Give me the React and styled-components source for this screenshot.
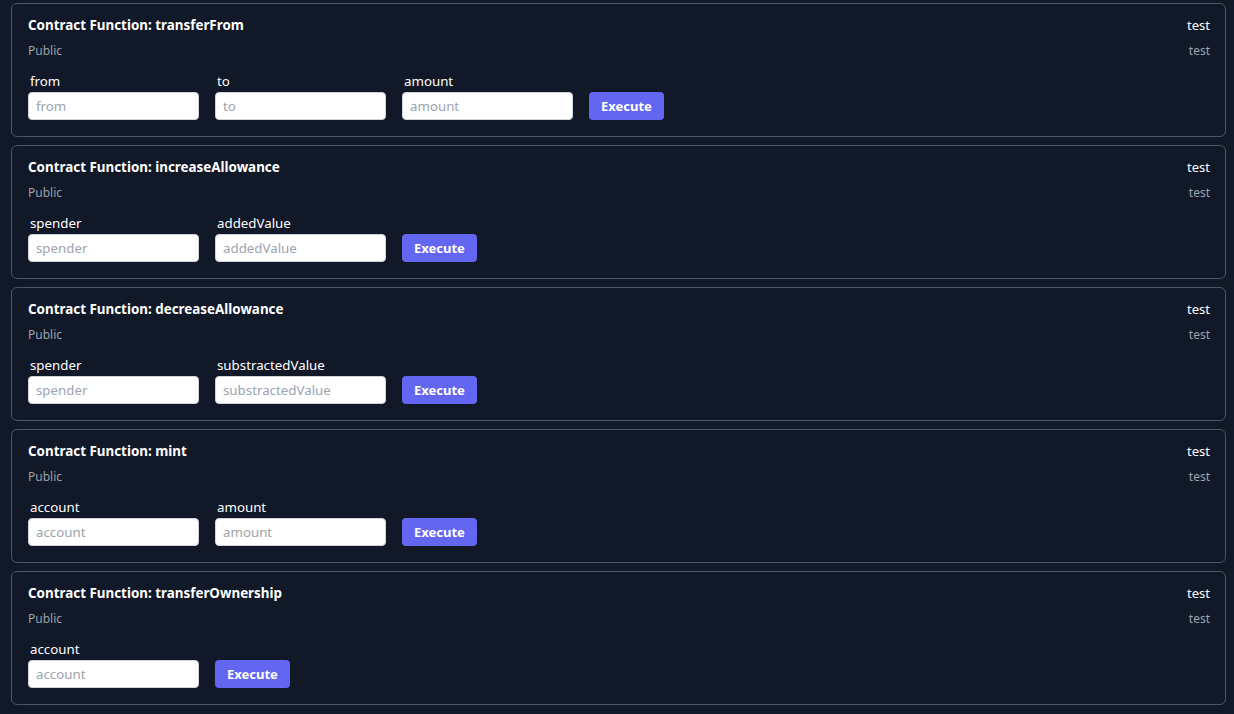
import React from 'react';
import styled, { createGlobalStyle } from 'styled-components';

const GlobalStyle = createGlobalStyle`
  html, body {
    margin: 0;
    padding: 0;
    background: #111827;
  }
  body {
    font-family: "Noto Sans", "Open Sans", Arial, sans-serif;
    color: #ffffff;
  }
`;

const Page = styled.div`
  display: flex;
  flex-direction: column;
  gap: 8px;
  padding: 3px 8px 8px 11px;
`;

const Card = styled.div`
  border: 1px solid #4b5563;
  border-radius: 6px;
  padding: 11px 15px 16px 16px;
`;

const Header = styled.div`
  display: flex;
  justify-content: space-between;
`;

const Col = styled.div`
  display: flex;
  flex-direction: column;
  align-items: ${(p) => (p.right ? 'flex-end' : 'flex-start')};
`;

const Title = styled.div`
  font-size: ${(p) => (p.light ? '13px' : '13.4px')};
  line-height: 20px;
  color: #ffffff;
  font-weight: ${(p) => (p.light ? 400 : 700)};
`;

const Sub = styled.div`
  font-size: 12px;
  line-height: 16px;
  margin-top: 8px;
  color: #9ca3af;
`;

const Row = styled.div`
  display: flex;
  align-items: flex-end;
  gap: 16px;
  margin-top: 12px;
`;

const Field = styled.div`
  display: flex;
  flex-direction: column;
`;

const Label = styled.label`
  font-size: 13.3px;
  line-height: 21px;
  padding-left: 2px;
  color: #ffffff;
`;

const Input = styled.input`
  box-sizing: border-box;
  width: 171px;
  height: 28px;
  border: 1px solid #d1d5db;
  border-radius: 4px;
  padding: 0 7px;
  font-family: inherit;
  font-size: 13.3px;
  color: #111827;
  background: #ffffff;
  outline: none;
  &::placeholder {
    color: #9ca3af;
  }
`;

const Button = styled.button`
  height: 28px;
  padding: 0 12px;
  border: none;
  border-radius: 4px;
  background: #6366f1;
  color: #ffffff;
  font-family: inherit;
  font-size: 13px;
  font-weight: 700;
  cursor: pointer;
`;

const functions = [
  { name: 'transferFrom', params: ['from', 'to', 'amount'] },
  { name: 'increaseAllowance', params: ['spender', 'addedValue'] },
  { name: 'decreaseAllowance', params: ['spender', 'substractedValue'] },
  { name: 'mint', params: ['account', 'amount'] },
  { name: 'transferOwnership', params: ['account'] },
];

export default function App() {
  return (
    <>
      <GlobalStyle />
      <Page>
        {functions.map((fn) => (
          <Card key={fn.name}>
            <Header>
              <Col>
                <Title>Contract Function: {fn.name}</Title>
                <Sub>Public</Sub>
              </Col>
              <Col right>
                <Title light>test</Title>
                <Sub>test</Sub>
              </Col>
            </Header>
            <Row>
              {fn.params.map((p) => (
                <Field key={p}>
                  <Label>{p}</Label>
                  <Input placeholder={p} />
                </Field>
              ))}
              <Button>Execute</Button>
            </Row>
          </Card>
        ))}
      </Page>
    </>
  );
}
